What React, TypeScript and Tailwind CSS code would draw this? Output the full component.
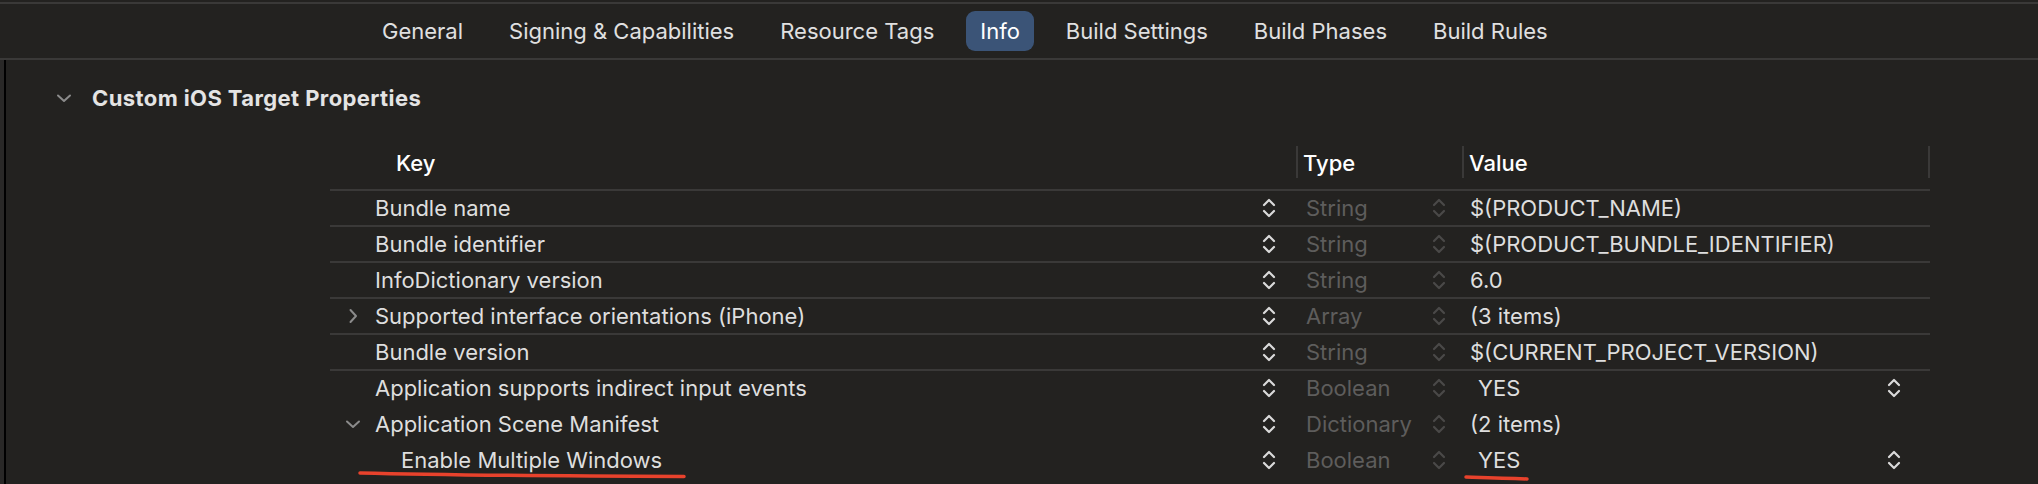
import React from "react";

const Stepper = ({ color }: { color: string }) => (
  <svg width="14" height="22" viewBox="0 0 14 22" fill="none" stroke={color} strokeWidth="2.2" strokeLinecap="round" strokeLinejoin="round">
    <path d="M2 8 L7 3 L12 8" />
    <path d="M2 14 L7 19 L12 14" />
  </svg>
);

const ChevronRight = () => (
  <svg width="10" height="16" viewBox="0 0 10 16" fill="none" stroke="#8b8b8b" strokeWidth="2" strokeLinecap="round" strokeLinejoin="round">
    <path d="M2.5 2 L8 8 L2.5 14" />
  </svg>
);

const ChevronDown = () => (
  <svg width="16" height="10" viewBox="0 0 16 10" fill="none" stroke="#8b8b8b" strokeWidth="2" strokeLinecap="round" strokeLinejoin="round">
    <path d="M2 2.5 L8 8 L14 2.5" />
  </svg>
);

type Row = {
  key: string;
  type: string;
  value: string;
  disclosure?: "right" | "down";
  indent?: boolean;
  popup?: boolean;
  border: boolean;
  annotateKey?: boolean;
};

const rows: Row[] = [
  { key: "Bundle name", type: "String", value: "$(PRODUCT_NAME)", border: true },
  { key: "Bundle identifier", type: "String", value: "$(PRODUCT_BUNDLE_IDENTIFIER)", border: true },
  { key: "InfoDictionary version", type: "String", value: "6.0", border: true },
  { key: "Supported interface orientations (iPhone)", type: "Array", value: "(3 items)", disclosure: "right", border: true },
  { key: "Bundle version", type: "String", value: "$(CURRENT_PROJECT_VERSION)", border: true },
  { key: "Application supports indirect input events", type: "Boolean", value: "YES", popup: true, border: false },
  { key: "Application Scene Manifest", type: "Dictionary", value: "(2 items)", disclosure: "down", border: false },
  { key: "Enable Multiple Windows", type: "Boolean", value: "YES", popup: true, indent: true, border: false, annotateKey: true },
];

const tabs = ["General", "Signing & Capabilities", "Resource Tags", "Info", "Build Settings", "Build Phases", "Build Rules"];

export default function App() {
  return (
    <div
      className="w-[2038px] h-[484px] overflow-hidden bg-[#232220] text-[#dedede] text-[22px]"
      style={{ fontFamily: "Inter, 'Noto Sans', sans-serif" }}
    >
      <div className="pt-[2px]">
        <div className="h-[58px] border-t-2 border-b-2 border-[#3a3938] flex items-center pl-[368px] gap-[18px]">
          {tabs.map((t) => (
            <div
              key={t}
              className={
                t === "Info"
                  ? "h-[40px] px-[14px] rounded-[9px] bg-[#3b5477] text-white flex items-center"
                  : "h-[40px] px-[14px] flex items-center text-[#e0e0e0]"
              }
            >
              {t}
            </div>
          ))}
        </div>
      </div>

      <div className="flex h-[424px]">
        <div className="w-[4px] bg-[#292827]" />
        <div className="w-[2px] bg-black" />
        <div className="flex-1 flex flex-col">
          <div className="mt-[17px] h-[42px] flex items-center">
            <div className="w-[50px]" />
            <ChevronDown />
            <div className="w-[20px]" />
            <div className="font-bold text-[#e4e4e4] tracking-[0.4px]">Custom iOS Target Properties</div>
          </div>

          <div className="mt-[25px] ml-[324px] w-[1600px] flex flex-col">
            {/* header */}
            <div className="h-[47px] border-b-2 border-[#3a3938] flex items-start">
              <div className="w-[966px] h-[45px] flex items-center pb-[6px] pl-[66px] font-medium text-white">Key</div>
              <div className="w-[166px] h-[45px] flex items-center pb-[6px]">
                <div className="w-[2px] h-[32px] bg-[#3a3938] mt-[2px] self-start" />
                <span className="pl-[5px] font-medium text-white">Type</span>
              </div>
              <div className="w-[468px] h-[45px] flex items-center pb-[6px]">
                <div className="w-[2px] h-[32px] bg-[#3a3938] mt-[2px] self-start" />
                <span className="pl-[5px] font-medium text-white flex-1">Value</span>
                <div className="w-[2px] h-[32px] bg-[#3a3938] mt-[2px] self-start" />
              </div>
            </div>

            {rows.map((r) => (
              <div
                key={r.key}
                className={
                  r.border
                    ? "relative h-[36px] border-b-2 border-[#3a3938] flex items-center"
                    : "relative h-[36px] border-b-2 border-transparent flex items-center"
                }
              >
                <div className="w-[966px] flex items-center">
                  <div className="w-[45px] flex items-center justify-center">
                    {r.disclosure === "right" && <ChevronRight />}
                    {r.disclosure === "down" && <ChevronDown />}
                  </div>
                  <div className={r.indent ? "flex-1 pl-[26px] whitespace-nowrap" : "flex-1 whitespace-nowrap"}>{r.key}</div>
                  <Stepper color="#dadada" />
                  <div className="w-[20px]" />
                </div>
                <div className="w-[166px] flex items-center">
                  <div className="flex-1 pl-[10px] text-[#5e5d5c]">{r.type}</div>
                  <Stepper color="#4a4948" />
                  <div className="w-[16px]" />
                </div>
                <div className="w-[468px] flex items-center">
                  <div className={r.popup ? "flex-1 pl-[16px]" : "flex-1 pl-[8px]"}>{r.value}</div>
                  {r.popup && <Stepper color="#dadada" />}
                  <div className="w-[29px]" />
                </div>
                {r.annotateKey && (
                  <>
                    <svg className="absolute left-[28px] top-[27px]" width="330" height="10" viewBox="0 0 330 10" fill="none">
                      <path d="M2 3 C 80 5, 200 6, 326 6.5" stroke="#e8422c" strokeWidth="3.5" strokeLinecap="round" />
                    </svg>
                    <svg className="absolute left-[1134px] top-[31px]" width="66" height="8" viewBox="0 0 66 8" fill="none">
                      <path d="M2 3 C 20 3.5, 40 4, 63 5" stroke="#e8422c" strokeWidth="3.5" strokeLinecap="round" />
                    </svg>
                  </>
                )}
              </div>
            ))}
          </div>
        </div>
      </div>
    </div>
  );
}
